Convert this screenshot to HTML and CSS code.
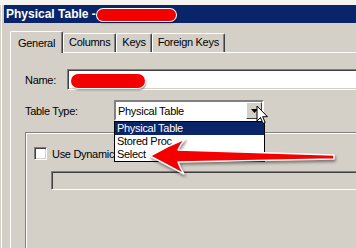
FILE: index.html
```html
<!DOCTYPE html>
<html lang="en">
<head>
  <meta charset="UTF-8">
  <title>Physical Table</title>
  <link rel="stylesheet" href="styles.css">
</head>
<body>
  <div id="window">
    <div class="top-strip"></div>
    <div id="title-bar">
      <span class="title">Physical Table -</span>
      <span class="redact title-redact"></span>
    </div>

    <div id="tabs">
      <div class="tab active">General</div>
      <div class="tab">Columns</div>
      <div class="tab">Keys</div>
      <div class="tab">Foreign Keys</div>
    </div>

    <div id="panel">
      <div class="form-row name-row">
        <span class="label name-label">Name:</span>
        <div class="field">
          <span class="redact field-redact"></span>
        </div>
      </div>

      <div class="form-row type-row">
        <span class="label type-label">Table Type:</span>
        <div class="combo">
          <span class="combo-value">Physical Table</span>
          <span class="combo-button">
            <svg width="7" height="4" viewBox="0 0 7 4"><path d="M0 0h7L3.5 4z" fill="#000"/></svg>
          </span>
          <ul class="combo-list">
            <li class="selected">Physical Table</li>
            <li>Stored Proc</li>
            <li>Select</li>
          </ul>
          <svg class="pointer" width="13" height="20" viewBox="0 0 13 20">
            <path d="M1 1v15l3.5-3.5 2.5 6 2.2-1-2.5-5.8H11.5z" fill="#fff" stroke="#000" stroke-width="1" stroke-linejoin="miter"/>
          </svg>
        </div>
      </div>

      <div class="group">
        <div class="check-row">
          <span class="checkbox"></span>
          <span class="label check-label">Use Dynamic</span>
        </div>
        <div class="field disabled"></div>
      </div>
    </div>

    <!-- hand drawn arrow on top of the screenshot -->
    <svg class="red-arrow" width="210" height="48" viewBox="0 0 210 48">
      <path d="M10 24 Q27 14 45 7 Q40 13 38 18 L194 23 L194 27 L38 30 Q40 36 44 42 Q27 33 10 24 Z"
            fill="#f40000" stroke="#fff" stroke-width="1.5" stroke-linejoin="round"/>
    </svg>
  </div>
</body>
</html>
```

FILE: styles.css
```css
body {
  margin: 0;
  font-family: 'Liberation Sans', Arial, sans-serif;
  font-size: 11px;
  letter-spacing: -0.3px;
  color: #000;
}
#window {
  position: relative;
  width: 356px;
  height: 248px;
  overflow: hidden;
  background: linear-gradient(to right, #d4d0c8 1px, #fff 1px, #fff 2px, #d4d0c8 2px);
}
.top-strip {
  height: 5px;
  background: #f4f3ef;
}
#title-bar {
  margin-left: 4px;
  height: 18px;
  background: #0a246a;
  display: flex;
  align-items: center;
  padding-left: 2px;
}
#title-bar .title {
  color: #fff;
  font-weight: bold;
  font-size: 12px;
  letter-spacing: 0;
}
.redact {
  display: block;
  background: #f50000;
  border-radius: 7px;
  box-shadow: 0 0 0 1px #fff, 1px 2px 2px rgba(0, 0, 0, 0.45);
}
.title-redact {
  width: 79px;
  height: 12px;
  margin-left: 1px;
  margin-top: 2px;
}

/* tabs */
#tabs {
  display: flex;
  align-items: flex-end;
  margin: 8px 0 0 10px;
  height: 21px;
}
.tab {
  height: 18px;
  line-height: 17px;
  padding: 0 5px;
  background: #d4d0c8;
  border-top: 1px solid #fff;
  border-left: 1px solid #fff;
  border-right: 1px solid #404040;
  box-shadow: inset -1px 0 #808080;
  border-radius: 2px 2px 0 0;
}
.tab.active {
  position: relative;
  z-index: 1;
  height: 21px;
  line-height: 22px;
  padding: 0 7px;
  margin-bottom: -1px;
}

#panel {
  margin-left: 10px;
  width: 400px;
  height: 200px;
  border-top: 1px solid #fff;
  border-left: 1px solid #fff;
  padding: 16px 0 0 14px;
}
.form-row {
  display: flex;
  align-items: center;
}
.name-label {
  width: 42px;
}
.type-label {
  width: 89px;
}
.type-row {
  margin-top: 10px;
}
.field {
  flex: 1;
  height: 19px;
  background: #fff;
  border: 1px solid;
  border-color: #808080 #fff #fff #808080;
  box-shadow: inset 1px 1px #404040, inset -1px -1px #d4d0c8;
  display: flex;
  align-items: center;
}
.field.disabled {
  flex: none;
  height: 17px;
  margin: 11px 0 0 25px;
  background: #d4d0c8;
}
.field-redact {
  width: 74px;
  height: 14px;
  margin: 3px 0 0 3px;
}

/* combo box with the list dropped down */
.combo {
  position: relative;
  width: 146px;
  height: 17px;
  background: #fff;
  border: 2px solid;
  border-color: #808080 #fff #fff #808080;
  display: flex;
  align-items: center;
}
.combo-value {
  flex: 1;
  padding-left: 2px;
}
.combo-button {
  width: 14px;
  height: 15px;
  background: #d4d0c8;
  border: 1px solid;
  border-color: #fff #404040 #404040 #fff;
  display: flex;
  justify-content: center;
  align-items: center;
}
.combo-list {
  position: absolute;
  top: 19px;
  left: -2px;
  width: 149px;
  margin: 0;
  padding: 0;
  list-style: none;
  background: #fff;
  border: 1px solid #000;
  z-index: 2;
}
.combo-list li {
  height: 13px;
  line-height: 13px;
  padding-left: 2px;
}
.combo-list li.selected {
  background: #0a246a;
  color: #fff;
}
.pointer {
  position: absolute;
  left: 140px;
  top: 3px;
  z-index: 3;
}

/* group box */
.group {
  margin-top: 11px;
  height: 200px;
  border-top: 1px solid #808080;
  border-left: 1px solid #808080;
  box-shadow: inset 1px 1px #fff;
  padding: 14px 0 0 9px;
}
.check-row {
  display: flex;
  align-items: center;
  gap: 5px;
  margin-left: -1px;
  white-space: nowrap;
}
.checkbox {
  width: 11px;
  height: 11px;
  background: #fff;
  border: 1px solid;
  border-color: #808080 #fff #fff #808080;
  box-shadow: inset 1px 1px #404040, inset -1px -1px #d4d0c8;
}
.group .field.disabled {
  margin-left: 16px;
}

.red-arrow {
  position: absolute;
  left: 140px;
  top: 132px;
  z-index: 5;
  filter: drop-shadow(1px 2px 1.5px rgba(0, 0, 0, 0.45));
}
```
